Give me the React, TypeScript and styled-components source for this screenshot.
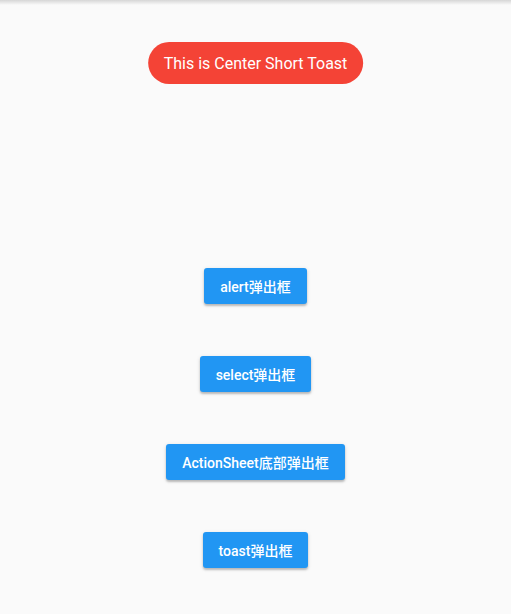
import React from "react";
import styled, { createGlobalStyle } from "styled-components";

const Global = createGlobalStyle`
  html, body { margin: 0; padding: 0; background: #fafafa; }
  body { font-family: Roboto, "Noto Sans CJK SC", sans-serif; }
`;

const Page = styled.div`
  position: relative;
  width: 511px;
  height: 614px;
  background: #fafafa;
  overflow: hidden;
`;

const TopShadow = styled.div`
  height: 5px;
  background: linear-gradient(to bottom, #d6d6d6, #fafafa);
`;

const Toast = styled.div`
  position: absolute;
  top: 42px;
  left: 50%;
  transform: translateX(-50%);
  height: 42px;
  padding: 0 16px;
  display: flex;
  align-items: center;
  white-space: nowrap;
  border-radius: 21px;
  background: #f44336;
  color: #ffffff;
  font-size: 16px;
  font-family: Roboto, sans-serif;
`;

const Column = styled.div`
  display: flex;
  flex-direction: column;
  align-items: center;
  gap: 52px;
  padding-top: 263px;
`;

const Button = styled.button`
  height: 36px;
  min-width: 88px;
  padding: 0 16px;
  border: none;
  border-radius: 3px;
  background: #2196f3;
  color: #ffffff;
  font-family: Roboto, "Noto Sans CJK SC", sans-serif;
  font-size: 14px;
  font-weight: 500;
  box-shadow: 0 2px 2px rgba(0, 0, 0, 0.2), 0 1px 4px rgba(0, 0, 0, 0.12);
  cursor: pointer;
`;

const labels = ["alert弹出框", "select弹出框", "ActionSheet底部弹出框", "toast弹出框"];

export default function App() {
  return (
    <Page>
      <Global />
      <TopShadow />
      <Column>
        {labels.map((l) => (
          <Button key={l}>{l}</Button>
        ))}
      </Column>
      <Toast>This is Center Short Toast</Toast>
    </Page>
  );
}
